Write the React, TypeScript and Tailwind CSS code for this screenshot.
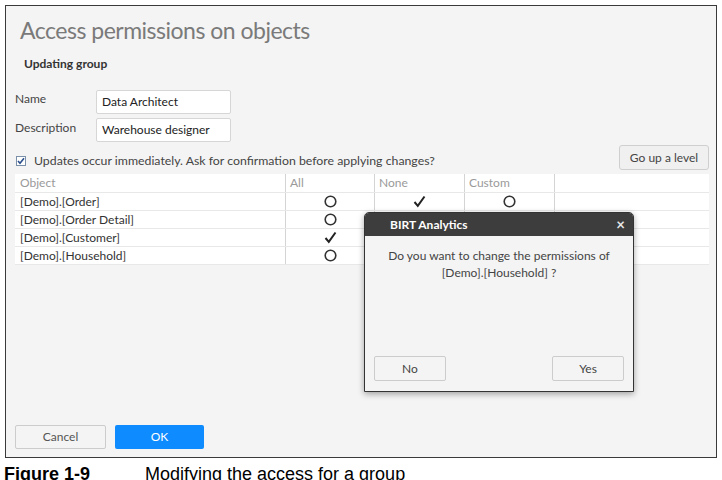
import React from "react";

type Mark = "circle" | "check" | null;

const rows: { name: string; all: Mark; none: Mark; custom: Mark }[] = [
  { name: "[Demo].[Order]", all: "circle", none: "check", custom: "circle" },
  { name: "[Demo].[Order Detail]", all: "circle", none: "check", custom: "circle" },
  { name: "[Demo].[Customer]", all: "check", none: "circle", custom: "circle" },
  { name: "[Demo].[Household]", all: "circle", none: "check", custom: "circle" },
];

const MarkIcon: React.FC<{ mark: Mark }> = ({ mark }) => {
  if (mark === "circle") {
    return (
      <svg width="13" height="13" viewBox="0 0 13 13">
        <circle cx="6.5" cy="6.5" r="5.3" fill="none" stroke="#333" strokeWidth="1.6" />
      </svg>
    );
  }
  if (mark === "check") {
    return (
      <svg width="13" height="13" viewBox="0 0 13 13">
        <path d="M1.5 7 L4.8 10.8 L11.5 1.5" fill="none" stroke="#222" strokeWidth="2" />
      </svg>
    );
  }
  return null;
};

const App: React.FC = () => {
  return (
    <div
      className="w-[722px] h-[480px] bg-white overflow-hidden"
      style={{ fontFamily: "Lato, 'Open Sans', sans-serif" }}
    >
      <div className="relative ml-[5px] mt-[5px] w-[712px] h-[453px] border border-[#3a3a3a] bg-[#f4f4f4] flex flex-col pl-[9px] pr-[7px]">
        <h1 className="mt-[10px] ml-[5px] text-[23px] leading-[28px] text-[#7a7a7a] font-normal tracking-[-0.5px]">
          Access permissions on objects
        </h1>
        <h2 className="mt-[13px] ml-[9px] text-[12px] leading-[14px] font-bold text-[#333]">
          Updating group
        </h2>

        <div className="mt-[19px] flex flex-col gap-[4px]">
          <div className="flex items-start">
            <span className="w-[81px] text-[12px] leading-[14px] text-[#444] mt-[2px]">Name</span>
            <div className="w-[135px] h-[24px] bg-white border border-[#d6d6d6] rounded-[2px] px-[5px] flex items-center text-[12px] text-[#222]">
              Data Architect
            </div>
          </div>
          <div className="flex items-start">
            <span className="w-[81px] text-[12px] leading-[14px] text-[#444] mt-[3px]">Description</span>
            <div className="w-[135px] h-[24px] bg-white border border-[#d6d6d6] rounded-[2px] px-[5px] flex items-center text-[12px] text-[#222]">
              Warehouse designer
            </div>
          </div>
        </div>

        <div className="mt-[3px] flex items-end justify-between">
          <div className="flex items-center gap-[8px] ml-[1px] mb-[2px]">
            <div className="w-[10px] h-[10px] border border-[#7a8fa8] bg-white flex items-center justify-center">
              <svg width="8" height="8" viewBox="0 0 8 8">
                <path d="M1 4 L3 6.3 L7 1.3" fill="none" stroke="#2a4f8c" strokeWidth="1.6" />
              </svg>
            </div>
            <span className="text-[12.3px] leading-[14px] text-[#444]">
              Updates occur immediately. Ask for confirmation before applying changes?
            </span>
          </div>
          <button className="w-[90px] h-[25px] bg-[#f0f0f0] border border-[#cfcfcf] rounded-[3px] text-[12px] text-[#444]">
            Go up a level
          </button>
        </div>

        <div className="mt-[4px] w-[694px] bg-white text-[12px]">
          <div className="flex h-[19px] border-b border-[#e8e8e8] text-[#9a9a9a]">
            <div className="w-[270px] pl-[5px] flex items-center">Object</div>
            <div className="w-[89px] pl-[4px] border-l border-[#d4d4d4] flex items-center">All</div>
            <div className="w-[90px] pl-[4px] border-l border-[#d4d4d4] flex items-center">None</div>
            <div className="w-[90px] pl-[4px] border-l border-[#d4d4d4] flex items-center">Custom</div>
            <div className="flex-1 border-l border-[#d4d4d4]"></div>
          </div>
          {rows.map((r) => (
            <div key={r.name} className="flex h-[18px] border-b border-[#e8e8e8] text-[#333]">
              <div className="w-[270px] pl-[5px] flex items-center">{r.name}</div>
              <div className="w-[89px] border-l border-[#d4d4d4] flex items-center justify-center">
                <MarkIcon mark={r.all} />
              </div>
              <div className="w-[90px] border-l border-[#d4d4d4] flex items-center justify-center">
                <MarkIcon mark={r.none} />
              </div>
              <div className="w-[90px] border-l border-[#d4d4d4] flex items-center justify-center">
                <MarkIcon mark={r.custom} />
              </div>
              <div className="flex-1 border-l border-[#d4d4d4]"></div>
            </div>
          ))}
        </div>

        <div className="flex-1"></div>

        <div className="flex gap-[9px] mb-[8px]">
          <button className="w-[91px] h-[24px] bg-[#f4f4f4] border border-[#cccccc] rounded-[2px] text-[12px] text-[#555]">
            Cancel
          </button>
          <button className="w-[89px] h-[24px] bg-[#0d8bff] rounded-[2px] text-[12px] text-white">
            OK
          </button>
        </div>

        <div className="absolute left-[358px] top-[206px] w-[270px] h-[180px] border border-[#333] rounded-t-[5px] bg-[#f4f4f4] shadow-[0_2px_6px_rgba(0,0,0,0.35)] flex flex-col overflow-hidden">
          <div className="h-[23px] bg-[#3d3d3d] flex items-center justify-between pl-[25px] pr-[8px]">
            <span className="text-[12px] font-bold text-white">BIRT Analytics</span>
            <span className="text-[15px] leading-none text-[#e8e8e8] font-bold">×</span>
          </div>
          <div className="mt-[11px] text-center text-[12px] leading-[17px] text-[#444]">
            Do you want to change the permissions of
            <br />
            [Demo].[Household] ?
          </div>
          <div className="flex-1"></div>
          <div className="flex justify-between px-[9px] mb-[10px]">
            <button className="w-[72px] h-[25px] bg-[#f4f4f4] border border-[#cccccc] rounded-[2px] text-[12px] text-[#444]">
              No
            </button>
            <button className="w-[72px] h-[25px] bg-[#f4f4f4] border border-[#cccccc] rounded-[2px] text-[12px] text-[#444]">
              Yes
            </button>
          </div>
        </div>
      </div>

      <div
        className="flex items-baseline mt-[5px] ml-[4px] text-[18px] leading-[22px] text-black"
        style={{ fontFamily: "'Liberation Sans', Arial, sans-serif" }}
      >
        <span className="w-[141px] font-bold">Figure 1-9</span>
        <span>Modifying the access for a group</span>
      </div>
    </div>
  );
};

export default App;
